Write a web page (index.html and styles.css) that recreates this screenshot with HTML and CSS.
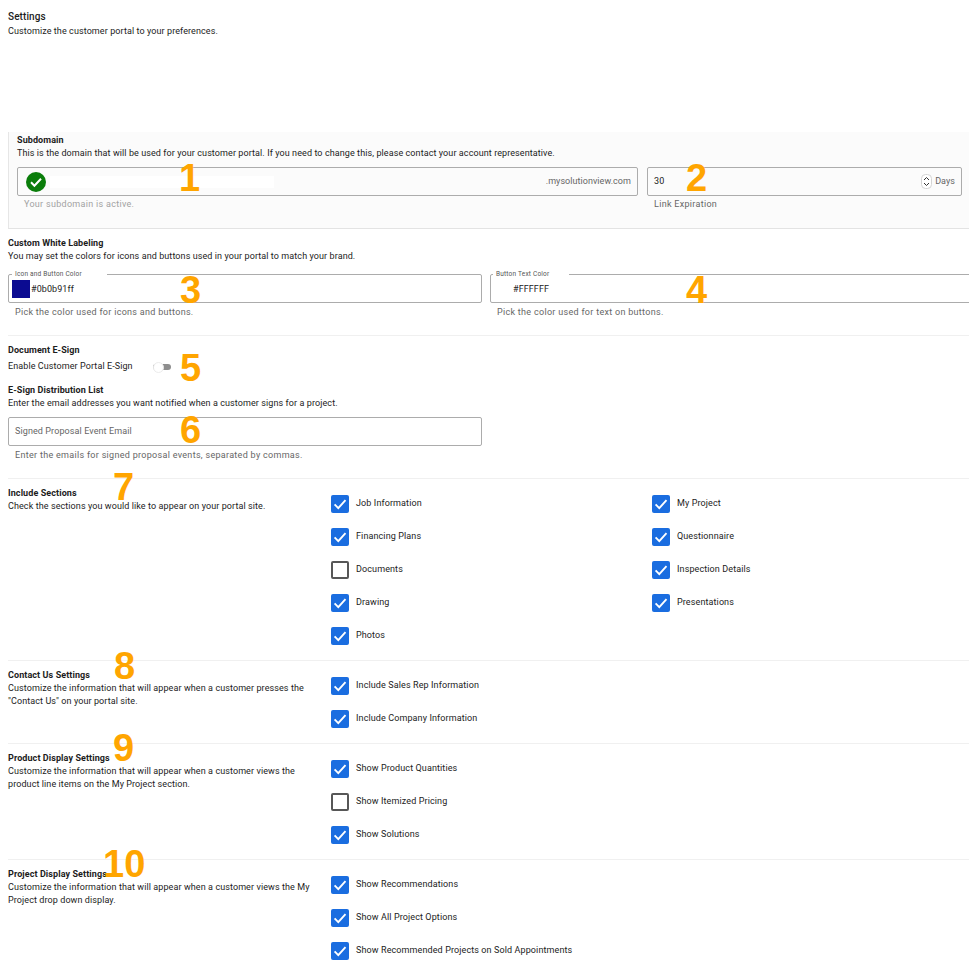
FILE: index.html
```html
<!DOCTYPE html>
<html lang="en">
<head>
    <meta charset="UTF-8">
    <meta name="viewport" content="width=device-width, initial-scale=1.0">
    <title>Settings</title>
    <link rel="stylesheet" href="styles.css">
</head>
<body>
    <svg class="defs" width="0" height="0" aria-hidden="true">
        <symbol id="tick" viewBox="0 0 18 18">
            <path d="M3.6 9.4l3.7 3.7 7.2-8" fill="none" stroke="#fff" stroke-width="1.9"/>
        </symbol>
    </svg>
    <div class="page">
        <header class="page-head">
            <h1>Settings</h1>
            <p>Customize the customer portal to your preferences.</p>
        </header>

        <section class="subdomain">
            <h2>Subdomain</h2>
            <p>This is the domain that will be used for your customer portal. If you need to change this, please contact your account representative.</p>
            <div class="subdomain-fields">
                <div class="field-wrap domain-wrap">
                    <div class="field">
                        <svg class="ok-icon" width="20" height="20" viewBox="0 0 20 20">
                            <circle cx="10" cy="10" r="10" fill="#0a7d0a"/>
                            <path d="M5 10.3l3.4 3.4 6.6-7" fill="none" stroke="#fff" stroke-width="2"/>
                        </svg>
                        <span class="redacted"></span>
                        <span class="suffix">.mysolutionview.com</span>
                    </div>
                    <div class="helper helper-light">Your subdomain is active.</div>
                </div>
                <div class="field-wrap days-wrap">
                    <div class="field">
                        <span class="value">30</span>
                        <svg class="spinner" width="11" height="15" viewBox="0 0 11 15">
                            <rect x=".5" y=".5" width="10" height="14" rx="4" fill="#fff" stroke="#d4d4d4"/>
                            <path d="M3 6l2.5-2.5L8 6M3 9l2.5 2.5L8 9" fill="none" stroke="#333" stroke-width="1"/>
                        </svg>
                        <span class="suffix">Days</span>
                    </div>
                    <div class="helper">Link Expiration</div>
                </div>
            </div>
        </section>

        <section class="labeling">
            <h2>Custom White Labeling</h2>
            <p>You may set the colors for icons and buttons used in your portal to match your brand.</p>
            <div class="color-fields">
                <div class="field-wrap">
                    <div class="field color-field">
                        <span class="field-label label-icon">Icon and Button Color</span>
                        <span class="swatch"></span>
                        <span class="value">#0b0b91ff</span>
                    </div>
                    <div class="helper">Pick the color used for icons and buttons.</div>
                </div>
                <div class="field-wrap text-wrap">
                    <div class="field color-field text-color">
                        <span class="field-label label-text">Button Text Color</span>
                        <span class="value">#FFFFFF</span>
                    </div>
                    <div class="helper">Pick the color used for text on buttons.</div>
                </div>
            </div>
        </section>

        <section class="esign">
            <h2>Document E-Sign</h2>
            <div class="toggle-row">
                <span>Enable Customer Portal E-Sign</span>
                <span class="toggle"><span class="knob"></span></span>
            </div>
            <h2>E-Sign Distribution List</h2>
            <p>Enter the email addresses you want notified when a customer signs for a project.</p>
            <div class="field-wrap email-wrap">
                <div class="field"><span class="placeholder">Signed Proposal Event Email</span></div>
                <div class="helper">Enter the emails for signed proposal events, separated by commas.</div>
            </div>
        </section>

        <section class="options options-sections">
            <div class="options-text">
                <h2>Include Sections</h2>
                <p>Check the sections you would like to appear on your portal site.</p>
            </div>
            <ul class="checks">
                <li><span class="box on"><svg width="18" height="18"><use href="#tick"/></svg></span>Job Information</li>
                <li><span class="box on"><svg width="18" height="18"><use href="#tick"/></svg></span>Financing Plans</li>
                <li><span class="box"></span>Documents</li>
                <li><span class="box on"><svg width="18" height="18"><use href="#tick"/></svg></span>Drawing</li>
                <li><span class="box on"><svg width="18" height="18"><use href="#tick"/></svg></span>Photos</li>
            </ul>
            <ul class="checks">
                <li><span class="box on"><svg width="18" height="18"><use href="#tick"/></svg></span>My Project</li>
                <li><span class="box on"><svg width="18" height="18"><use href="#tick"/></svg></span>Questionnaire</li>
                <li><span class="box on"><svg width="18" height="18"><use href="#tick"/></svg></span>Inspection Details</li>
                <li><span class="box on"><svg width="18" height="18"><use href="#tick"/></svg></span>Presentations</li>
            </ul>
        </section>

        <section class="options options-contact">
            <div class="options-text">
                <h2>Contact Us Settings</h2>
                <p>Customize the information that will appear when a customer presses the "Contact Us" on your portal site.</p>
            </div>
            <ul class="checks">
                <li><span class="box on"><svg width="18" height="18"><use href="#tick"/></svg></span>Include Sales Rep Information</li>
                <li><span class="box on"><svg width="18" height="18"><use href="#tick"/></svg></span>Include Company Information</li>
            </ul>
        </section>

        <section class="options options-product">
            <div class="options-text">
                <h2>Product Display Settings</h2>
                <p>Customize the information that will appear when a customer views the product line items on the My Project section.</p>
            </div>
            <ul class="checks">
                <li><span class="box on"><svg width="18" height="18"><use href="#tick"/></svg></span>Show Product Quantities</li>
                <li><span class="box"></span>Show Itemized Pricing</li>
                <li><span class="box on"><svg width="18" height="18"><use href="#tick"/></svg></span>Show Solutions</li>
            </ul>
        </section>

        <section class="options options-last">
            <div class="options-text">
                <h2>Project Display Settings</h2>
                <p>Customize the information that will appear when a customer views the My Project drop down display.</p>
            </div>
            <ul class="checks checks-wide">
                <li><span class="box on"><svg width="18" height="18"><use href="#tick"/></svg></span>Show Recommendations</li>
                <li><span class="box on"><svg width="18" height="18"><use href="#tick"/></svg></span>Show All Project Options</li>
                <li><span class="box on"><svg width="18" height="18"><use href="#tick"/></svg></span>Show Recommended Projects on Sold Appointments</li>
            </ul>
        </section>

        <span class="num num-1">1</span>
        <span class="num num-2">2</span>
        <span class="num num-3">3</span>
        <span class="num num-4">4</span>
        <span class="num num-5">5</span>
        <span class="num num-6">6</span>
        <span class="num num-7">7</span>
        <span class="num num-8">8</span>
        <span class="num num-9">9</span>
        <span class="num num-10">10</span>
    </div>
</body>
</html>
```

FILE: styles.css
```css
html, body {
    margin: 0;
    padding: 0;
    background: #fff;
}
body {
    font-family: Roboto, "Liberation Sans", sans-serif;
    font-size: 9px;
    line-height: 13px;
    color: #1c1c1c;
    letter-spacing: 0.09px;
    overflow-x: hidden;
}
.defs {
    position: absolute;
}
.page {
    position: relative;
    width: 969px;
    height: 978px;
    overflow: hidden;
    box-sizing: border-box;
    padding-left: 8px;
}
h1, h2, p, ul {
    margin: 0;
    padding: 0;
}
h1 {
    font-size: 10px;
    line-height: 15px;
    font-weight: 500;
}
h2 {
    font-size: 9px;
    line-height: 13px;
    font-weight: 700;
}
.page-head {
    padding-top: 9px;
    height: 132px;
    box-sizing: border-box;
}
.page-head p {
    line-height: 14px;
}

/* subdomain panel */
.subdomain {
    height: 97px;
    box-sizing: border-box;
    padding: 2px 0 0 8px;
    background: #fbfbfb;
    border-left: 1px solid #e6e6e6;
    border-bottom: 1px solid #e3e3e3;
}
.subdomain-fields {
    display: flex;
    gap: 9px;
    margin-top: 7px;
}
.domain-wrap {
    width: 621px;
}
.days-wrap {
    width: 315px;
}
.days-wrap .field {
    padding-left: 6px;
}
.field {
    display: flex;
    align-items: center;
    position: relative;
    height: 29px;
    box-sizing: border-box;
    padding: 0 6px 0 7px;
    border: 1px solid #acacac;
    border-radius: 2px;
}
.helper {
    margin-top: 2px;
    padding-left: 7px;
    color: #666;
    letter-spacing: 0.3px;
}
.helper-light {
    color: #a2a2a2;
}
.ok-icon {
    flex: none;
    margin-left: 1px;
}
.redacted {
    width: 224px;
    height: 12px;
    margin-left: 4px;
    background: #fff;
}
.suffix {
    margin-left: auto;
    color: #666;
    letter-spacing: 0.05px;
}
.value {
    color: #222;
}
.spinner {
    margin-left: auto;
}
.spinner + .suffix {
    margin-left: 3px;
}

/* white labeling */
.labeling {
    padding-top: 8px;
    height: 107px;
    box-sizing: border-box;
    border-bottom: 1px solid #f0f0f0;
}
.color-fields {
    display: flex;
    gap: 8px;
    margin-top: 11px;
}
.color-fields .field-wrap {
    width: 474px;
    flex: none;
}
.color-fields .text-wrap {
    width: 500px;
}
.color-fields .helper {
    margin-top: 3px;
}
.color-field {
    padding: 0 3px;
}
.color-field .value {
    margin-top: 2px;
}
.text-color {
    padding-left: 22px;
}
.field-label {
    position: absolute;
    top: -5px;
    left: 3px;
    padding: 0 25px 0 3px;
    background: #fff;
    font-size: 6.5px;
    line-height: 9px;
    color: #555;
    letter-spacing: 0.2px;
}
.label-text {
    left: 2px;
    padding-right: 20px;
}
.swatch {
    width: 18px;
    height: 18px;
    margin-right: 1px;
    background: #0b0b91;
}

/* e-sign */
.esign {
    padding-top: 8px;
    height: 143px;
    box-sizing: border-box;
    border-bottom: 1px solid #f0f0f0;
}
.toggle-row {
    display: flex;
    align-items: center;
    margin: 3px 0 11px;
    height: 13px;
}
.toggle {
    position: relative;
    width: 18px;
    height: 6px;
    margin-left: 20px;
    background: #8e8e8e;
    border-radius: 3px;
}
.knob {
    position: absolute;
    left: 0;
    top: -2px;
    width: 9px;
    height: 9px;
    background: #fff;
    border: 1px solid #ececec;
    border-radius: 50%;
}
.email-wrap {
    width: 474px;
    margin-top: 7px;
}
.email-wrap .field {
    padding-left: 6px;
}
.email-wrap .helper {
    margin-top: 3px;
}
.placeholder {
    color: #666;
    letter-spacing: 0.1px;
}

/* option rows */
.options {
    display: grid;
    grid-template-columns: 323px 321px 1fr;
    padding-top: 8px;
    box-sizing: border-box;
    border-bottom: 1px solid #f0f0f0;
}
.options-sections {
    height: 182px;
}
.options-contact {
    height: 83px;
}
.options-product {
    height: 116px;
}
.options-last {
    border-bottom: 0;
}
.options-text {
    padding-right: 15px;
}
.checks {
    list-style: none;
}
.checks-wide {
    grid-column: span 2;
}
.checks li {
    display: flex;
    align-items: center;
    height: 33px;
    color: #222;
    letter-spacing: 0.11px;
}
.box {
    flex: none;
    width: 18px;
    height: 18px;
    box-sizing: border-box;
    margin-right: 7px;
    background: #fff;
    border: 2px solid #575757;
    border-radius: 2px;
}
.box.on {
    background: #1a6de0;
    border: 0;
}
.box svg {
    display: block;
}

/* numbered callouts on top of the screenshot */
.num {
    position: absolute;
    font-family: "Liberation Sans", sans-serif;
    font-size: 38px;
    line-height: 38px;
    font-weight: 700;
    color: #ffa500;
    letter-spacing: 0;
}
.num-1 { left: 179px; top: 159px; }
.num-2 { left: 686px; top: 159px; }
.num-3 { left: 180px; top: 271px; }
.num-4 { left: 686px; top: 271px; }
.num-5 { left: 180px; top: 349px; }
.num-6 { left: 180px; top: 411px; }
.num-7 { left: 113px; top: 468px; }
.num-8 { left: 114px; top: 647px; }
.num-9 { left: 113px; top: 729px; }
.num-10 { left: 103px; top: 845px; }
```
